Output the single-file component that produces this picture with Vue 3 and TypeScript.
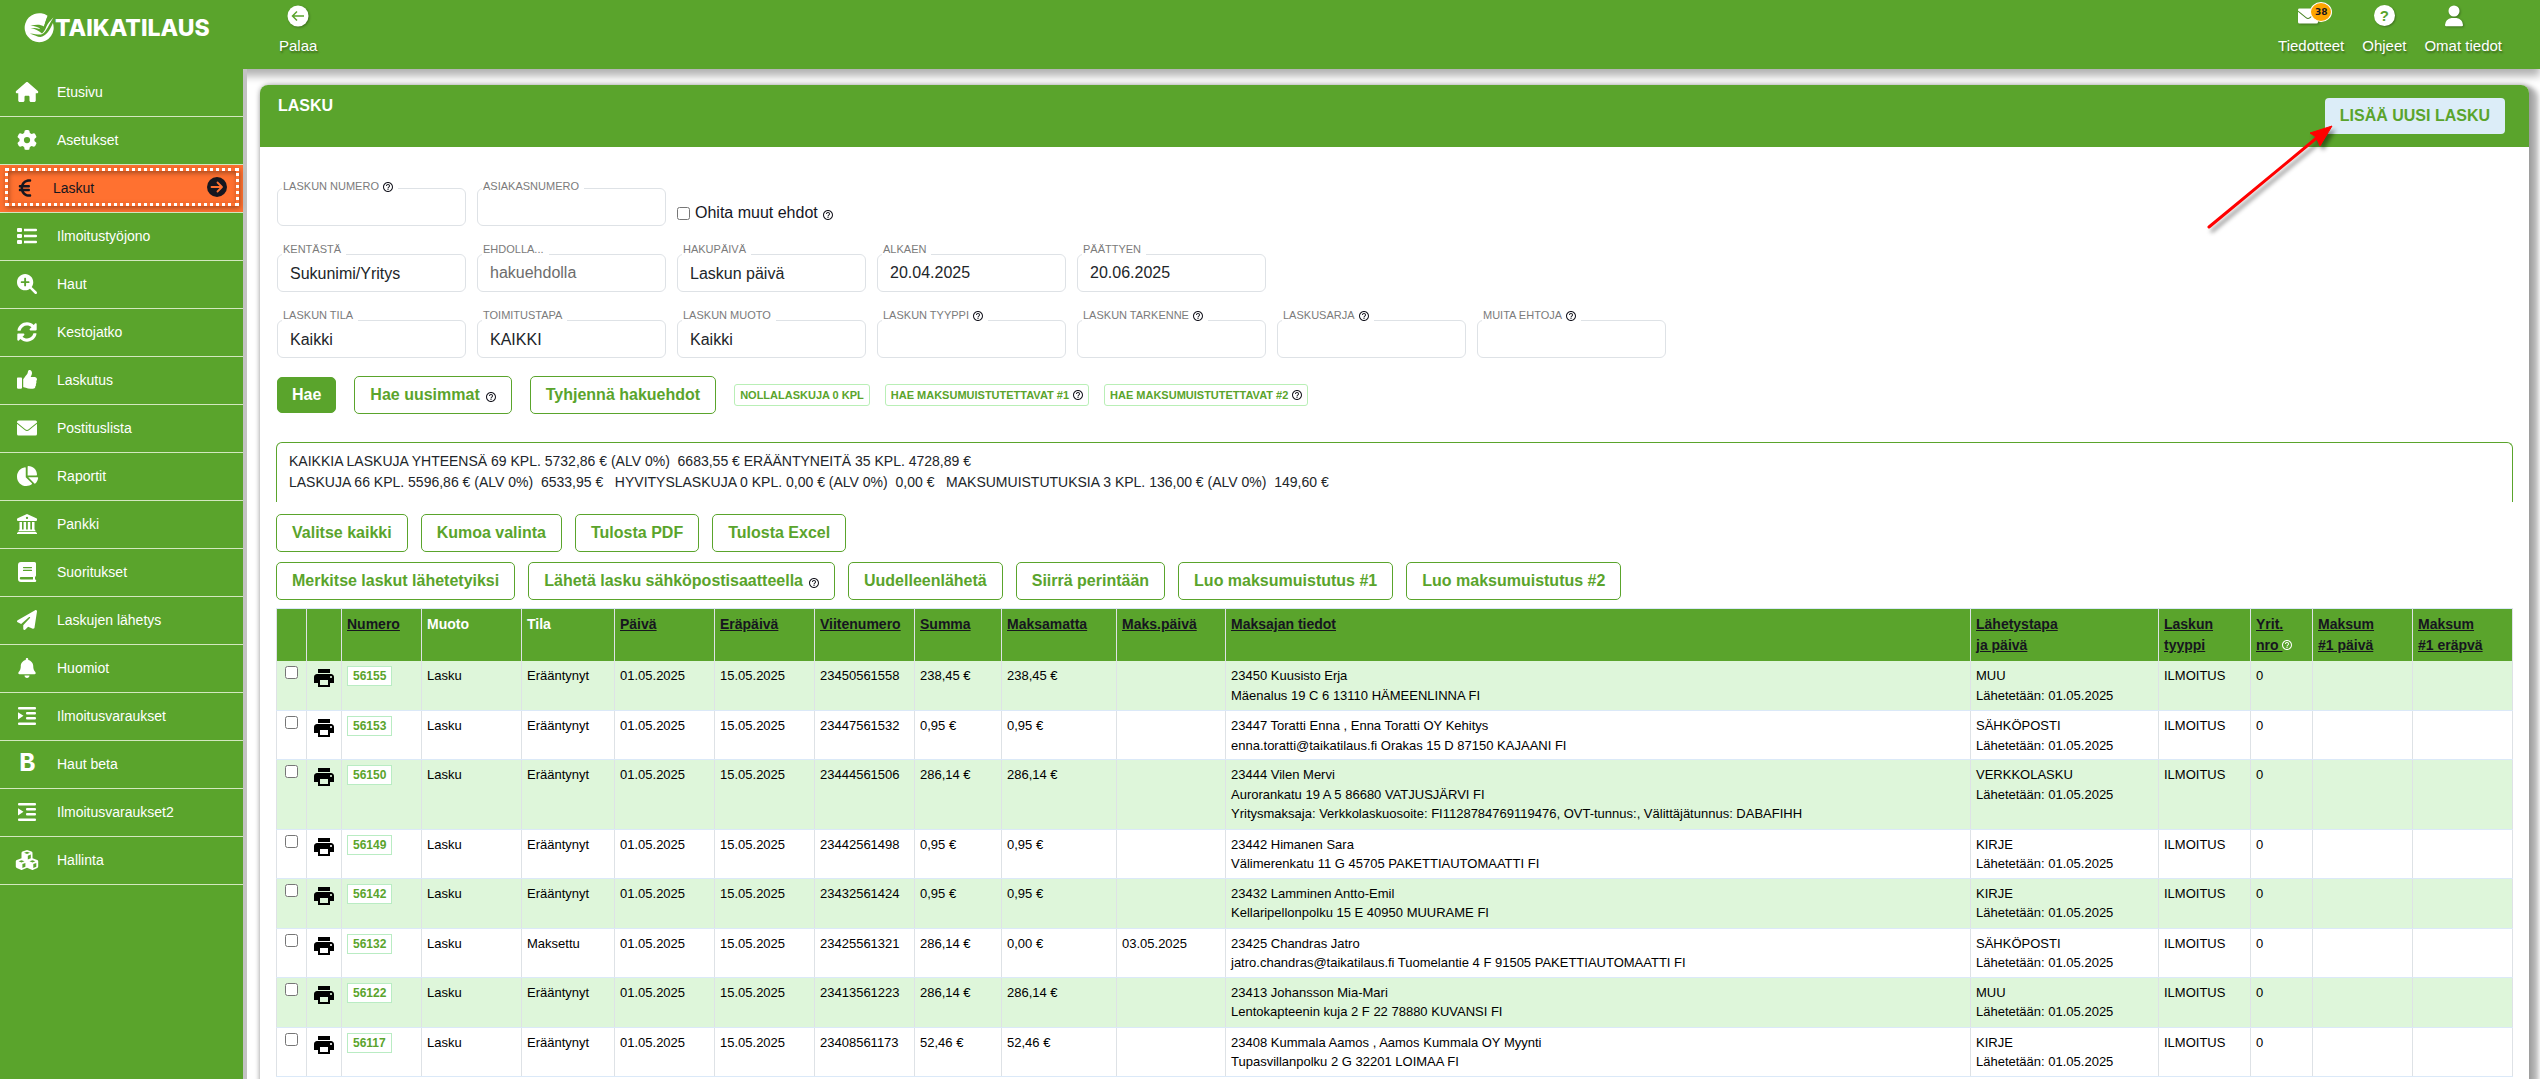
<script setup lang="ts">
import { defineComponent, h, ref } from 'vue'

interface MenuItem {
  label: string
  icon: string
  active?: boolean
}

interface Field {
  id: string
  label: string
  value?: string
  placeholder?: string
  kind: 'text' | 'select'
  help?: boolean
}

interface Column {
  width?: number
  lines: string[]
  link?: boolean
  help?: boolean
}

interface Invoice {
  number: string
  status: string
  reference: string
  sum: string
  unpaid: string
  paidOn?: string
  payer: string[]
  channel: string
}

const HelpIcon = defineComponent({
  setup: () => () =>
    h('svg', { class: 'help', viewBox: '2 2 20 20', 'aria-hidden': 'true' }, [
      h('path', {
        fill: 'currentColor',
        d: 'M11 18h2v-2h-2v2zm1-16C6.48 2 2 6.48 2 12s4.48 10 10 10 10-4.48 10-10S17.52 2 12 2zm0 18c-4.41 0-8-3.59-8-8s3.59-8 8-8 8 3.59 8 8-3.59 8-8 8zm0-14c-2.21 0-4 1.79-4 4h2c0-1.1.9-2 2-2s2 .9 2 2c0 2-3 1.75-3 5h2c0-2.25 3-2.5 3-5 0-2.21-1.79-4-4-4z',
      }),
    ]),
})

const icons: Record<string, { box: string; d: string }> = {
  home: {
    box: '0 0 576 512',
    d: 'M575.8 255.5c0 18-15 32.1-32 32.1h-32l.7 160.2c0 2.7-.2 5.4-.5 8.1V472c0 22.1-17.9 40-40 40H392c-22.1 0-40-17.9-40-40V384c0-17.7-14.3-32-32-32H256c-17.7 0-32 14.3-32 32v88c0 22.1-17.9 40-40 40H104c-22.1 0-40-17.9-40-40V287.600H32c-18 0-32-14-32-32.100c0-9 3-17 10-24L266.400 8c7-7 15-8 22-8s15 2 21 7L564.800 231.500c8 7 12 15 11 24z',
  },
  gear: {
    box: '0 0 512 512',
    d: 'M495.9 166.6c3.2 8.7 .5 18.4-6.4 24.6l-43.3 39.4c1.1 8.3 1.7 16.8 1.7 25.4s-.6 17.1-1.7 25.4l43.3 39.4c6.9 6.2 9.6 15.9 6.4 24.6c-4.4 11.900-9.7 23.300-15.8 34.300l-4.700 8.100c-6.600 11-14 21.400-22.100 31.200c-5.900 7.200-15.700 9.600-24.500 6.800l-55.700-17.700c-13.400 10.300-28.200 18.900-44 25.400l-12.500 57.100c-2 9.100-9 16.300-18.200 17.800c-13.800 2.300-28 3.500-42.500 3.500s-28.700-1.200-42.500-3.500c-9.200-1.500-16.200-8.700-18.200-17.800l-12.500-57.100c-15.800-6.500-30.600-15.100-44-25.400L83.100 425.900c-8.800 2.800-18.600 .3-24.500-6.800c-8.100-9.800-15.500-20.200-22.100-31.200l-4.700-8.100c-6.100-11-11.400-22.400-15.800-34.300c-3.200-8.700-.5-18.400 6.400-24.600l43.300-39.400C64.600 273.100 64 264.600 64 256s.6-17.100 1.700-25.400L22.400 191.200c-6.900-6.200-9.600-15.900-6.400-24.600c4.400-11.900 9.700-23.300 15.800-34.300l4.700-8.100c6.600-11 14-21.400 22.100-31.200c5.900-7.200 15.700-9.600 24.500-6.800l55.700 17.700c13.400-10.300 28.200-18.900 44-25.400l12.500-57.100c2-9.100 9-16.300 18.200-17.800C227.300 1.200 241.500 0 256 0s28.700 1.200 42.500 3.500c9.200 1.500 16.200 8.700 18.200 17.800l12.500 57.100c15.800 6.500 30.600 15.100 44 25.400l55.700-17.700c8.800-2.800 18.600-.3 24.500 6.800c8.100 9.800 15.500 20.200 22.100 31.200l4.700 8.100c6.100 11 11.400 22.400 15.800 34.300zM256 336a80 80 0 1 0 0-160 80 80 0 1 0 0 160z',
  },
  euro: {
    box: '0 0 320 512',
    d: 'M48.1 240c-.1 2.7-.1 5.3-.1 8v16c0 2.7 0 5.3 .1 8H32c-17.7 0-32 14.3-32 32s14.3 32 32 32H60.3C89.9 419.9 170 480 264 480h24c17.7 0 32-14.3 32-32s-14.3-32-32-32H264c-57.9 0-108.2-32.4-133.9-80H256c17.7 0 32-14.3 32-32s-14.3-32-32-32H112.2c-.1-2.6-.2-5.3-.2-8V248c0-2.7 .1-5.4 .2-8H256c17.7 0 32-14.3 32-32s-14.3-32-32-32H130.1c25.7-47.6 76-80 133.9-80h24c17.7 0 32-14.3 32-32s-14.3-32-32-32H264C170 32 89.9 92.1 60.3 176H32c-17.7 0-32 14.3-32 32s14.3 32 32 32H48.1z',
  },
  list: {
    box: '0 0 20 20',
    d: 'M1 2h3a1 1 0 0 1 1 1v2a1 1 0 0 1-1 1H1a1 1 0 0 1-1-1V3a1 1 0 0 1 1-1zM1 8h3a1 1 0 0 1 1 1v2a1 1 0 0 1-1 1H1a1 1 0 0 1-1-1V9a1 1 0 0 1 1-1zM1 14h3a1 1 0 0 1 1 1v2a1 1 0 0 1-1 1H1a1 1 0 0 1-1-1v-2a1 1 0 0 1 1-1zM7 2.800h12a1 1 0 0 1 1 1v.5a1 1 0 0 1-1 1H7zM7 8.800h12a1 1 0 0 1 1 1v.5a1 1 0 0 1-1 1H7zM7 14.800h12a1 1 0 0 1 1 1v.5a1 1 0 0 1-1 1H7z',
  },
  search: {
    box: '0 0 512 512',
    d: 'M416 208c0 45.900-14.900 88.300-40 122.700L502.600 457.400c12.500 12.500 12.500 32.800 0 45.300s-32.800 12.500-45.300 0L330.700 376c-34.400 25.200-76.800 40-122.700 40C93.100 416 0 322.900 0 208S93.100 0 208 0S416 93.100 416 208zM184 296c0 13.300 10.700 24 24 24s24-10.700 24-24V232h64c13.300 0 24-10.700 24-24s-10.700-24-24-24H232V120c0-13.300-10.700-24-24-24s-24 10.700-24 24v64H120c-13.300 0-24 10.700-24 24s10.700 24 24 24h64v64z',
  },
  sync: {
    box: '0 0 512 512',
    d: 'M370.72 133.28C339.458 104.008 298.888 87.962 255.848 88c-77.458.068-144.328 53.178-162.791 126.85-1.344 5.363-6.122 9.15-11.651 9.15H24.103c-7.498 0-13.194-6.807-11.807-14.176C33.933 94.924 134.813 8 256 8c66.448 0 126.791 26.136 171.315 68.685L463.03 40.97C478.149 25.851 504 36.559 504 57.941V192c0 13.255-10.745 24-24 24H345.941c-21.382 0-32.09-25.851-16.971-40.971l41.75-41.749zM32 296h134.059c21.382 0 32.09 25.851 16.971 40.971l-41.75 41.75c31.262 29.273 71.835 45.319 114.876 45.28 77.418-.07 144.315-53.144 162.787-126.849 1.344-5.363 6.122-9.15 11.651-9.15h57.304c7.498 0 13.194 6.807 11.807 14.176C478.067 417.076 377.187 504 256 504c-66.448 0-126.791-26.136-171.315-68.685L48.97 471.03C33.851 486.149 8 475.441 8 454.059V320c0-13.255 10.745-24 24-24z',
  },
  thumb: {
    box: '0 0 512 512',
    d: 'M104 192H24c-13.255 0-24 10.745-24 24v240c0 13.255 10.745 24 24 24h80c13.255 0 24-10.745 24-24V216c0-13.255-10.745-24-24-24zM384 81.452c0 42.416-25.97 66.208-33.277 94.548h101.723c33.397 0 59.397 27.746 59.553 58.098.084 17.938-7.546 37.249-19.439 49.197l-.11.11c9.836 23.337 8.237 56.037-9.308 79.469 8.681 25.895-.069 40-16.382 57 4.298 17.598-4 38-20 46-18 14-50 14-100 14-48 0-88-10-120-24-16-7-40-16-56-16-6.540-.12-11.783-5.457-11.783-11.998v-189.770c0-3.2 1.282-6.271 3.558-8.521 39.614-39.144 56.648-80.587 89.117-113.111 14.804-14.832 20.188-37.236 25.393-58.902C282.515 39.293 291.817 0 312 0c24 0 72 8 72 81.452z',
  },
  mail: {
    box: '0 0 20 20',
    d: 'M1.500 2.500h17A1.500 1.500 0 0 1 20 4v.6l-8.300 6.700a2.600 2.600 0 0 1-3.400 0L0 4.600V4a1.500 1.500 0 0 1 1.500-1.500zM0 5.800l7.700 6.300a3.700 3.700 0 0 0 4.600 0L20 5.800V16a1.500 1.500 0 0 1-1.500 1.500h-17A1.500 1.500 0 0 1 0 16z',
  },
  pie: {
    box: '0 0 576 512',
    d: 'M304 240V16.6c0-9 7-16.6 16-16.6C443.7 0 544 100.3 544 224c0 9-7.6 16-16.6 16H304zM32 272C32 150.7 122.1 50.3 239 34.3c9.2-1.3 17 6.1 17 15.4V288L412.5 444.5c6.7 6.7 6.2 17.7-1.5 23.1C371.8 495.6 323.8 512 272 512C139.5 512 32 404.6 32 272zm526.4 16c9.3 0 16.6 7.8 15.4 17c-7.7 55.9-34.6 105.6-73.9 142.3c-6 5.6-15.4 5.2-21.2-.7L320 288H558.400z',
  },
  bank: {
    box: '0 0 20 20',
    d: 'M10 0l9.300 4.200a1 1 0 0 1 .7 1V6a1 1 0 0 1-1 1H1a1 1 0 0 1-1-1v-.8a1 1 0 0 1 .6-1zM10 2.800a1.100 1.100 0 1 0 .01 0zM2.500 8H5v7.500h1.600V8h2.500v7.500h1.700V8h2.500v7.500H15V8h2.500v7.600l.8.500v.9H1.700v-.9l.8-.5zM1.500 17.700h17L20 19v1H0v-1z',
  },
  book: {
    box: '0 0 20 20',
    d: 'M4 0h13.500A1.500 1.500 0 0 1 19 1.500v12a1.500 1.500 0 0 1-1 1.400v2.600a1.200 1.200 0 0 1 0 2.500H4a3 3 0 0 1-3-3V3a3 3 0 0 1 3-3zM4 15a1.200 1.200 0 0 0 0 2.500h12V15zM6.500 5a.6.6 0 0 0 0 1.200h8a.6.6 0 0 0 0-1.200zM6.500 7.800a.6.6 0 0 0 0 1.200h8a.6.6 0 0 0 0-1.200z',
  },
  plane: {
    box: '0 0 512 512',
    d: 'M498.1 5.6c10.1 7 15.4 19.1 13.5 31.2l-64 416c-1.5 9.7-7.4 18.2-16 23s-18.9 5.4-28 1.6L284 427.7l-68.5 74.1c-8.9 9.7-22.9 12.9-35.2 8.1S160 493.2 160 480V396.4c0-4 1.5-7.8 4.2-10.7L331.8 202.8c5.8-6.3 5.6-16-.4-22s-15.7-6.4-22-.7L106 360.8 17.7 316.6C7.1 311.3 .3 300.7 0 288.9s5.9-22.8 16.1-28.7l448-256c10.7-6.1 23.9-5.5 34 1.4z',
  },
  bell: {
    box: '0 0 448 512',
    d: 'M224 0c-17.7 0-32 14.3-32 32V51.2C119 66 64 130.6 64 208v18.8c0 47-17.3 92.4-48.5 127.6l-7.4 8.3c-8.4 9.4-10.4 22.9-5.3 34.4S19.4 416 32 416H416c12.6 0 24-7.4 29.2-18.9s3.1-25-5.3-34.4l-7.4-8.3C401.3 319.2 384 273.9 384 226.8V208c0-77.4-55-142-128-156.8V32c0-17.7-14.3-32-32-32zm45.3 493.3c12-12 18.7-28.3 18.7-45.3H224 160c0 17 6.7 33.3 18.7 45.3s28.3 18.7 45.3 18.7s33.3-6.7 45.3-18.7z',
  },
  indent: {
    box: '0 0 20 20',
    d: 'M2 1h16a1 1 0 0 1 1 1v.500a1 1 0 0 1-1 1H2a1 1 0 0 1-1-1V2a1 1 0 0 1 1-1zM10 6h8a1 1 0 0 1 1 1v.5a1 1 0 0 1-1 1h-8a1 1 0 0 1-1-1V7a1 1 0 0 1 1-1zM10 11h8a1 1 0 0 1 1 1v.5a1 1 0 0 1-1 1h-8a1 1 0 0 1-1-1V12a1 1 0 0 1 1-1zM2 16.500h16a1 1 0 0 1 1 1v.500a1 1 0 0 1-1 1H2a1 1 0 0 1-1-1v-.500a1 1 0 0 1 1-1zM1 6.200v7.200l5.500-3.600z',
  },
  cubes: {
    box: '0 0 24 20',
    d: 'M12 0l4.500 1.600a1.500 1.500 0 0 1 1 1.400v5.200l4.700 1.700a1.500 1.500 0 0 1 1 1.400v5.200a1.500 1.500 0 0 1-.9 1.400l-4.100 1.900a1.800 1.800 0 0 1-1.500 0L12 17.700l-4.700 2.100a1.800 1.800 0 0 1-1.500 0l-4.100-1.900a1.500 1.500 0 0 1-.9-1.400v-5.200a1.500 1.500 0 0 1 1-1.400l4.700-1.700V3a1.500 1.500 0 0 1 1-1.400zM12 1.700L9 2.800l3 1.100 3-1.100zM12.800 5.700v3.800l3-1.200V4.600zM6.500 10.200l-2.900 1.100 2.900 1.100 3-1.100zM7.400 14v4l3-1.300V13zM17.500 10.200l-3 1.100 3 1.100 2.900-1.100zM18.300 14v4l3-1.300V13z',
  },
}

const menu: MenuItem[] = [
  { label: 'Etusivu', icon: 'home' },
  { label: 'Asetukset', icon: 'gear' },
  { label: 'Laskut', icon: 'euro', active: true },
  { label: 'Ilmoitustyöjono', icon: 'list' },
  { label: 'Haut', icon: 'search' },
  { label: 'Kestojatko', icon: 'sync' },
  { label: 'Laskutus', icon: 'thumb' },
  { label: 'Postituslista', icon: 'mail' },
  { label: 'Raportit', icon: 'pie' },
  { label: 'Pankki', icon: 'bank' },
  { label: 'Suoritukset', icon: 'book' },
  { label: 'Laskujen lähetys', icon: 'plane' },
  { label: 'Huomiot', icon: 'bell' },
  { label: 'Ilmoitusvaraukset', icon: 'indent' },
  { label: 'Haut beta', icon: 'beta' },
  { label: 'Ilmoitusvaraukset2', icon: 'indent' },
  { label: 'Hallinta', icon: 'cubes' },
]

const fieldRows: Field[][] = [
  [
    { id: 'numero', label: 'LASKUN NUMERO', kind: 'text', help: true },
    { id: 'asiakas', label: 'ASIAKASNUMERO', kind: 'text' },
  ],
  [
    { id: 'kentta', label: 'KENTÄSTÄ', kind: 'select', value: 'Sukunimi/Yritys' },
    { id: 'ehto', label: 'EHDOLLA...', kind: 'text', placeholder: 'hakuehdolla' },
    { id: 'hakupaiva', label: 'HAKUPÄIVÄ', kind: 'select', value: 'Laskun päivä' },
    { id: 'alkaen', label: 'ALKAEN', kind: 'text', value: '20.04.2025' },
    { id: 'paattyen', label: 'PÄÄTTYEN', kind: 'text', value: '20.06.2025' },
  ],
  [
    { id: 'tila', label: 'LASKUN TILA', kind: 'select', value: 'Kaikki' },
    { id: 'toimitus', label: 'TOIMITUSTAPA', kind: 'select', value: 'KAIKKI' },
    { id: 'muoto', label: 'LASKUN MUOTO', kind: 'select', value: 'Kaikki' },
    { id: 'tyyppi', label: 'LASKUN TYYPPI', kind: 'text', help: true },
    { id: 'tarkenne', label: 'LASKUN TARKENNE', kind: 'text', help: true },
    { id: 'sarja', label: 'LASKUSARJA', kind: 'text', help: true },
    { id: 'muita', label: 'MUITA EHTOJA', kind: 'text', help: true },
  ],
]

const selectionActions = ['Valitse kaikki', 'Kumoa valinta', 'Tulosta PDF', 'Tulosta Excel']

const invoiceActions = [
  { label: 'Merkitse laskut lähetetyiksi' },
  { label: 'Lähetä lasku sähköpostisaatteella', help: true },
  { label: 'Uudelleenlähetä' },
  { label: 'Siirrä perintään' },
  { label: 'Luo maksumuistutus #1' },
  { label: 'Luo maksumuistutus #2' },
]

const columns: Column[] = [
  { width: 30, lines: [] },
  { width: 35, lines: [] },
  { width: 80, lines: ['Numero'], link: true },
  { width: 100, lines: ['Muoto'] },
  { width: 93, lines: ['Tila'] },
  { width: 100, lines: ['Päivä'], link: true },
  { width: 100, lines: ['Eräpäivä'], link: true },
  { width: 100, lines: ['Viitenumero'], link: true },
  { width: 87, lines: ['Summa'], link: true },
  { width: 115, lines: ['Maksamatta'], link: true },
  { width: 109, lines: ['Maks.päivä'], link: true },
  { lines: ['Maksajan tiedot'], link: true },
  { width: 188, lines: ['Lähetystapa', 'ja päivä'], link: true },
  { width: 92, lines: ['Laskun', 'tyyppi'], link: true },
  { width: 62, lines: ['Yrit.', 'nro '], link: true, help: true },
  { width: 100, lines: ['Maksum', '#1 päivä'], link: true },
  { width: 100, lines: ['Maksum', '#1 eräpvä'], link: true },
]

const invoices: Invoice[] = [
  { number: '56155', status: 'Erääntynyt', reference: '23450561558', sum: '238,45 €', unpaid: '238,45 €', payer: ['23450 Kuusisto Erja', 'Mäenalus 19 C 6 13110 HÄMEENLINNA FI'], channel: 'MUU' },
  { number: '56153', status: 'Erääntynyt', reference: '23447561532', sum: '0,95 €', unpaid: '0,95 €', payer: ['23447 Toratti Enna , Enna Toratti OY Kehitys', 'enna.toratti@taikatilaus.fi Orakas 15 D 87150 KAJAANI FI'], channel: 'SÄHKÖPOSTI' },
  { number: '56150', status: 'Erääntynyt', reference: '23444561506', sum: '286,14 €', unpaid: '286,14 €', payer: ['23444 Vilen Mervi', 'Aurorankatu 19 A 5 86680 VATJUSJÄRVI FI', 'Yritysmaksaja: Verkkolaskuosoite: FI1128784769119476, OVT-tunnus:, Välittäjätunnus: DABAFIHH'], channel: 'VERKKOLASKU' },
  { number: '56149', status: 'Erääntynyt', reference: '23442561498', sum: '0,95 €', unpaid: '0,95 €', payer: ['23442 Himanen Sara', 'Välimerenkatu 11 G 45705 PAKETTIAUTOMAATTI FI'], channel: 'KIRJE' },
  { number: '56142', status: 'Erääntynyt', reference: '23432561424', sum: '0,95 €', unpaid: '0,95 €', payer: ['23432 Lamminen Antto-Emil', 'Kellaripellonpolku 15 E 40950 MUURAME FI'], channel: 'KIRJE' },
  { number: '56132', status: 'Maksettu', reference: '23425561321', sum: '286,14 €', unpaid: '0,00 €', paidOn: '03.05.2025', payer: ['23425 Chandras Jatro', 'jatro.chandras@taikatilaus.fi Tuomelantie 4 F 91505 PAKETTIAUTOMAATTI FI'], channel: 'SÄHKÖPOSTI' },
  { number: '56122', status: 'Erääntynyt', reference: '23413561223', sum: '286,14 €', unpaid: '286,14 €', payer: ['23413 Johansson Mia-Mari', 'Lentokapteenin kuja 2 F 22 78880 KUVANSI FI'], channel: 'MUU' },
  { number: '56117', status: 'Erääntynyt', reference: '23408561173', sum: '52,46 €', unpaid: '52,46 €', payer: ['23408 Kummala Aamos , Aamos Kummala OY Myynti', 'Tupasvillanpolku 2 G 32201 LOIMAA FI'], channel: 'KIRJE' },
]

const skipOthers = ref(false)
const selected = ref<string[]>([])
</script>

<template>
  <div class="app">
    <header class="topbar">
      <a class="logo" href="#">
        <svg class="logo-mark" viewBox="0 0 30 30" aria-hidden="true">
          <path fill="#fff" d="M23.500 2.800A14.500 14.500 0 1 0 28.900 10c-2.200 5-5.400 11.500-10.600 13.600-3.600 1.200-6.600-1.200-12.600-3.200 6 .2 9.500 2.200 12.600.6C22.500 18.700 25 11 29.500 4.400c-3.500 3-7.500 8.800-9.900 11.600-3-3.400-7.600-2.600-12.600-3.600 5-.8 9.500-1.400 13 1.200z" />
          <path fill="#5aa42c" d="M24 3.200c-2.400 3-2.800 7.800-4.800 12-2.600-2.800-7.600-3-13.200-2.600 5 .6 8.500 1.400 10.500 3.600-3-1-6.500-1.400-10-1.200 4.500.9 8 2.500 11.500 5.400 3-2.400 4-6 5.500-9.500 1-2.500 2.500-4.400 4-5.600z" />
        </svg>
        <span class="logo-text">TAIKATILAUS</span>
      </a>
      <a class="top-link" href="#">
        <svg viewBox="0 0 22 22" aria-hidden="true">
          <circle cx="11" cy="11" r="10.500" fill="#fff" />
          <path d="M17 11H6M10 6.500L5.500 11l4.500 4.500" fill="none" stroke="#5aa42c" stroke-width="1.500" />
        </svg>
        <span>Palaa</span>
      </a>
      <nav class="top-right" aria-label="Käyttäjä">
        <a class="top-link" href="#">
          <span class="mail">
            <svg viewBox="0 0 20 20" aria-hidden="true"><path fill="#fff" :d="icons.mail.d" /></svg>
            <span class="count">38</span>
          </span>
          <span>Tiedotteet</span>
        </a>
        <a class="top-link" href="#">
          <span class="question" aria-hidden="true">?</span>
          <span>Ohjeet</span>
        </a>
        <a class="top-link" href="#">
          <svg class="person" viewBox="0 0 22 22" aria-hidden="true">
            <path fill="#fff" d="M11 .5a5.500 5.500 0 1 1 0 11 5.500 5.500 0 0 1 0-11zM8.500 13h5a7 7 0 0 1 6.500 7 1.200 1.200 0 0 1-1.200 1.200H3.200A1.200 1.200 0 0 1 2 20a7 7 0 0 1 6.500-7z" />
          </svg>
          <span>Omat tiedot</span>
        </a>
      </nav>
    </header>

    <div class="columns">
      <nav class="sidebar" aria-label="Päävalikko">
        <a v-for="item in menu" :key="item.label" href="#" class="item" :class="{ active: item.active }">
          <span v-if="item.icon === 'beta'" class="icon bold-icon" aria-hidden="true">B</span>
          <svg v-else class="icon" :viewBox="icons[item.icon].box" aria-hidden="true">
            <path fill="currentColor" fill-rule="evenodd" :d="icons[item.icon].d" />
          </svg>
          <span class="item-label">{{ item.label }}</span>
          <svg v-if="item.active" class="go" viewBox="0 0 20 20" aria-hidden="true">
            <circle cx="10" cy="10" r="10" fill="currentColor" />
            <path d="M4.500 10h10M10.500 5.500L15 10l-4.500 4.500" fill="none" stroke="#ff7130" stroke-width="1.800" stroke-linecap="round" stroke-linejoin="round" />
          </svg>
        </a>
      </nav>

      <main class="content">
        <section class="panel">
          <div class="panel-head">
            <h1>LASKU</h1>
            <button type="button" class="new-invoice">LISÄÄ UUSI LASKU</button>
          </div>
          <div class="panel-body">
            <form class="filters" @submit.prevent>
              <div v-for="(row, r) in fieldRows" :key="r" class="field-row" :class="{ first: r === 0 }">
                <div v-for="f in row" :key="f.id" class="field">
                  <label :for="f.id">{{ f.label }}<HelpIcon v-if="f.help" /></label>
                  <select v-if="f.kind === 'select'" :id="f.id">
                    <option>{{ f.value }}</option>
                  </select>
                  <input v-else :id="f.id" type="text" :value="f.value" :placeholder="f.placeholder" />
                </div>
                <label v-if="r === 0" class="skip">
                  <input v-model="skipOthers" type="checkbox" />
                  <span>Ohita muut ehdot</span>
                  <HelpIcon />
                </label>
              </div>
              <div class="search-row">
                <button type="submit" class="btn solid">Hae</button>
                <button type="button" class="btn">Hae uusimmat<HelpIcon /></button>
                <button type="button" class="btn">Tyhjennä hakuehdot</button>
                <div class="chips">
                  <button type="button" class="chip">NOLLALASKUJA 0 KPL</button>
                  <button type="button" class="chip">HAE MAKSUMUISTUTETTAVAT #1<HelpIcon /></button>
                  <button type="button" class="chip">HAE MAKSUMUISTUTETTAVAT #2<HelpIcon /></button>
                </div>
              </div>
            </form>

            <div class="summary">
              <div>KAIKKIA LASKUJA YHTEENSÄ 69 KPL. 5732,86 € (ALV 0%)&nbsp; 6683,55 € ERÄÄNTYNEITÄ 35 KPL. 4728,89 €</div>
              <div>LASKUJA 66 KPL. 5596,86 € (ALV 0%)&nbsp; 6533,95 € &nbsp; HYVITYSLASKUJA 0 KPL. 0,00 € (ALV 0%)&nbsp; 0,00 € &nbsp; MAKSUMUISTUTUKSIA 3 KPL. 136,00 € (ALV 0%)&nbsp; 149,60 €</div>
            </div>

            <div class="actions">
              <button v-for="a in selectionActions" :key="a" type="button" class="btn">{{ a }}</button>
            </div>
            <div class="actions second">
              <button v-for="a in invoiceActions" :key="a.label" type="button" class="btn">{{ a.label }}<HelpIcon v-if="a.help" /></button>
            </div>

            <table class="invoices">
              <colgroup>
                <col v-for="(c, i) in columns" :key="i" :style="c.width ? { width: c.width + 'px' } : {}" />
              </colgroup>
              <thead>
                <tr>
                  <th v-for="(c, i) in columns" :key="i" scope="col">
                    <a v-if="c.link" href="#"><template v-for="(l, n) in c.lines" :key="n"><br v-if="n > 0" />{{ l }}</template></a>
                    <template v-else>{{ c.lines[0] }}</template>
                    <HelpIcon v-if="c.help" />
                  </th>
                </tr>
              </thead>
              <tbody>
                <tr v-for="inv in invoices" :key="inv.number">
                  <td class="pick"><input v-model="selected" type="checkbox" :value="inv.number" :aria-label="'Valitse ' + inv.number" /></td>
                  <td class="print">
                    <svg viewBox="2 3 20 18" aria-hidden="true">
                      <path d="M19 8H5c-1.66 0-3 1.34-3 3v6h4v4h12v-4h4v-6c0-1.66-1.34-3-3-3zm-3 11H8v-5h8v5zm3-7c-.55 0-1-.45-1-1s.45-1 1-1 1 .45 1 1-.45 1-1 1zm-1-9H6v4h12V3z" />
                    </svg>
                  </td>
                  <td class="num"><a href="#">{{ inv.number }}</a></td>
                  <td>Lasku</td>
                  <td>{{ inv.status }}</td>
                  <td>01.05.2025</td>
                  <td>15.05.2025</td>
                  <td>{{ inv.reference }}</td>
                  <td>{{ inv.sum }}</td>
                  <td>{{ inv.unpaid }}</td>
                  <td>{{ inv.paidOn }}</td>
                  <td><div v-for="line in inv.payer" :key="line">{{ line }}</div></td>
                  <td><div>{{ inv.channel }}</div><div>Lähetetään: 01.05.2025</div></td>
                  <td>ILMOITUS</td>
                  <td>0</td>
                  <td></td>
                  <td></td>
                </tr>
              </tbody>
            </table>
          </div>
        </section>
        <svg class="pointer" viewBox="0 0 140 120" aria-hidden="true">
          <path d="M10 108L120 17" stroke="#f00" stroke-width="3" stroke-linecap="round" />
          <path d="M133 7L111 14l6 4 4 9z" fill="#f00" stroke="#f00" />
        </svg>
      </main>
    </div>
  </div>
</template>

<style>
body {
  margin: 0;
}
</style>

<style scoped>
.app {
  --green: #5aa42c;
  --ink: #16161f;
  display: flex;
  flex-direction: column;
  height: 100vh;
  overflow: hidden;
  background: #fff;
  color: var(--ink);
  font-family: "Liberation Sans", Arial, sans-serif;
  font-size: 16px;
}

button,
input,
select {
  font-family: inherit;
  box-sizing: border-box;
}

:deep(.help) {
  width: 10px;
  height: 10px;
  flex: none;
  color: var(--ink);
}

/* top bar */
.topbar {
  position: relative;
  z-index: 3;
  display: flex;
  flex: none;
  height: 69px;
  background: var(--green);
  box-shadow: 0 7px 8px rgba(0, 0, 0, 0.3);
}

.logo {
  display: flex;
  align-items: center;
  gap: 1px;
  width: 255px;
  height: 56px;
  padding-left: 24px;
  box-sizing: border-box;
  color: #fff;
  text-decoration: none;
}

.logo-mark {
  width: 30px;
  height: 30px;
}

.logo-text {
  font-family: Inter, "Open Sans", sans-serif;
  font-size: 23px;
  font-weight: 800;
}

.top-link {
  display: flex;
  flex-direction: column;
  align-items: center;
  gap: 10px;
  padding: 5px 9px 0;
  color: #fff;
  font-size: 15px;
  line-height: 18px;
  text-decoration: none;
  text-shadow: 1px 2px 2px rgba(0, 0, 0, 0.35);
}

.logo + .top-link {
  padding-left: 24px;
}

.top-link svg {
  width: 22px;
  height: 22px;
  filter: drop-shadow(1px 1px 1px rgba(0, 0, 0, 0.3));
}

.top-link .person {
  margin-right: 18px;
}

.top-right {
  display: flex;
  margin-left: auto;
  padding-right: 29px;
}

.mail {
  position: relative;
  display: flex;
  width: 26px;
  height: 22px;
}

.mail svg {
  width: 20px;
}

.count {
  position: absolute;
  top: -3px;
  left: 12px;
  width: 20px;
  height: 18px;
  border: 1px solid #fff;
  border-radius: 50%;
  background: #ffa500;
  color: var(--ink);
  font-family: "DejaVu Sans", sans-serif;
  font-size: 9px;
  font-weight: 700;
  line-height: 18px;
  text-align: center;
  text-shadow: none;
}

.question {
  width: 21px;
  height: 21px;
  margin-bottom: 1px;
  border-radius: 50%;
  background: #fff;
  color: var(--green);
  font-weight: 700;
  line-height: 21px;
  text-align: center;
  text-shadow: none;
  box-shadow: 1px 1px 2px rgba(0, 0, 0, 0.3);
}

.columns {
  display: flex;
  flex: 1;
  min-height: 0;
}

/* sidebar */
.sidebar {
  position: relative;
  z-index: 4;
  flex: none;
  width: 243px;
  background: var(--green);
  box-shadow: 4px 0 0 #c3c3c3;
}

.item {
  display: flex;
  align-items: center;
  gap: 18px;
  height: 48px;
  padding: 0 0 2px 15px;
  box-sizing: border-box;
  border-bottom: 1px solid #d3e8bf;
  color: #fff;
  font-size: 14px;
  text-decoration: none;
}

.icon {
  width: 24px;
  height: 20px;
}

.bold-icon {
  font-family: "Liberation Mono", monospace;
  font-size: 27px;
  font-weight: 700;
  line-height: 20px;
  text-align: center;
}

.active {
  position: relative;
  background: #ff7130;
  color: var(--ink);
  padding-left: 13px;
  gap: 16px;
}

.active::before {
  content: "";
  position: absolute;
  inset: 3px 4px 6px 5px;
  border: 3px dotted #fff;
  box-shadow: 1px 2px 5px rgba(0, 0, 0, 0.35), inset 1px 2px 5px rgba(0, 0, 0, 0.35);
}

.go {
  width: 20px;
  height: 20px;
  margin: 0 16px 2px auto;
}

/* content */
.content {
  position: relative;
  flex: 1;
  min-width: 0;
  padding: 16px 11px 0 17px;
  overflow: hidden auto;
  scrollbar-width: none;
}

.panel {
  border-radius: 8px 8px 0 0;
  background: #fff;
  box-shadow: 5px 5px 5px 4px rgba(0, 0, 0, 0.3), 0 0 5px 1px rgba(0, 0, 0, 0.2);
}

.panel-head {
  display: flex;
  align-items: flex-start;
  justify-content: space-between;
  padding: 13px 24px 13px 18px;
  border-radius: 8px 8px 0 0;
  background: var(--green);
}

h1 {
  margin: 0;
  color: #fff;
  font-size: 16px;
  line-height: 16px;
}

.new-invoice {
  height: 36px;
  padding: 0 15px;
  border: 0;
  border-radius: 4px;
  background: #dcedf8;
  color: var(--green);
  font-size: 16px;
  font-weight: 700;
}

.panel-body {
  padding: 41px 16px 40px;
}

.filters {
  display: flex;
  flex-direction: column;
  gap: 28px;
  padding-left: 1px;
}

.field-row {
  display: flex;
  gap: 11px;
}

.field {
  position: relative;
  width: 189px;
}

.field label {
  position: absolute;
  top: -11px;
  left: 5px;
  display: flex;
  align-items: center;
  gap: 4px;
  padding: 0 5px 0 1px;
  background: #fff;
  color: #7b7b7b;
  font-size: 11px;
  line-height: 13px;
}

.first .field label {
  top: -8px;
}

.field input,
.field select {
  display: block;
  width: 100%;
  height: 38px;
  padding: 0 12px;
  border: 1px solid #dee2e6;
  border-radius: 6px;
  background: #fff;
  color: #212529;
  font-size: 16px;
  appearance: none;
}

.field input::placeholder {
  color: #6c6c6c;
  opacity: 1;
}

.skip {
  display: flex;
  align-items: center;
  align-self: flex-end;
  gap: 5px;
  line-height: 26px;
}

.skip :deep(.help),
.btn :deep(.help) {
  margin-top: 3px;
}

.skip input,
.pick input {
  width: 13px;
  height: 13px;
  margin: 0;
}

.search-row {
  display: flex;
  align-items: center;
  gap: 18px;
  margin-top: -10px;
}

.btn {
  display: flex;
  align-items: center;
  gap: 6px;
  height: 38px;
  padding: 0 15px;
  border: 1px solid var(--green);
  border-radius: 5px;
  background: #fff;
  color: var(--green);
  font-size: 16px;
  font-weight: 700;
}

.btn.solid {
  height: 36px;
  padding: 0 14px;
  background: var(--green);
  color: #fff;
}

.chips {
  display: flex;
  gap: 15px;
}

.chip {
  display: flex;
  align-items: center;
  gap: 4px;
  height: 22px;
  padding: 0 5px;
  border: 1px solid #b9efb6;
  border-radius: 3px;
  background: #fff;
  color: var(--green);
  font-size: 11px;
  font-weight: 700;
}

.summary {
  height: 60px;
  margin-top: 28px;
  padding: 8px 12px 0;
  box-sizing: border-box;
  border: 1px solid var(--green);
  border-bottom: 0;
  border-radius: 6px 6px 0 0;
  color: #212529;
  font-size: 14px;
  line-height: 21px;
}

.actions {
  display: flex;
  gap: 13px;
  margin-top: 12px;
}

.actions.second {
  margin-top: 10px;
}

/* invoice table */
.invoices {
  width: 100%;
  margin-top: 8px;
  border-collapse: collapse;
  table-layout: fixed;
  color: #000;
  font-size: 13px;
  line-height: 1.5;
}

th,
td {
  padding: 5px;
  border: 1px solid #dee2e6;
  border-top-color: #dbe9f8;
  border-bottom-color: #dbe9f8;
  text-align: left;
  vertical-align: top;
  white-space: nowrap;
}

th {
  border-bottom: 0;
  background: var(--green);
  color: #fff;
  font-size: 14px;
}

th a {
  color: var(--ink);
}

th :deep(.help) {
  color: #fff;
}

tbody tr:first-child td {
  border-top: 0;
}

tbody tr:nth-child(odd) {
  background: #def6da;
}

tbody tr:nth-child(even) td {
  padding-bottom: 4px;
}

.pick {
  text-align: center;
  line-height: 0;
}

.print {
  padding: 8px 7px 0;
  line-height: 0;
}

.print svg {
  width: 20px;
  height: 18px;
}

.num a {
  display: inline-block;
  padding: 0 5px;
  border: 1px solid #b9ecc3;
  background: #fff;
  color: var(--green);
  font-size: 12px;
  font-weight: 700;
  line-height: 18px;
  text-decoration: none;
}

/* callout arrow drawn over the page, ending at the new-invoice button */
.pointer {
  position: absolute;
  top: 50px;
  right: 201px;
  width: 140px;
  height: 120px;
  pointer-events: none;
  filter: drop-shadow(3px 4px 2px rgba(0, 0, 0, 0.45));
}
</style>
